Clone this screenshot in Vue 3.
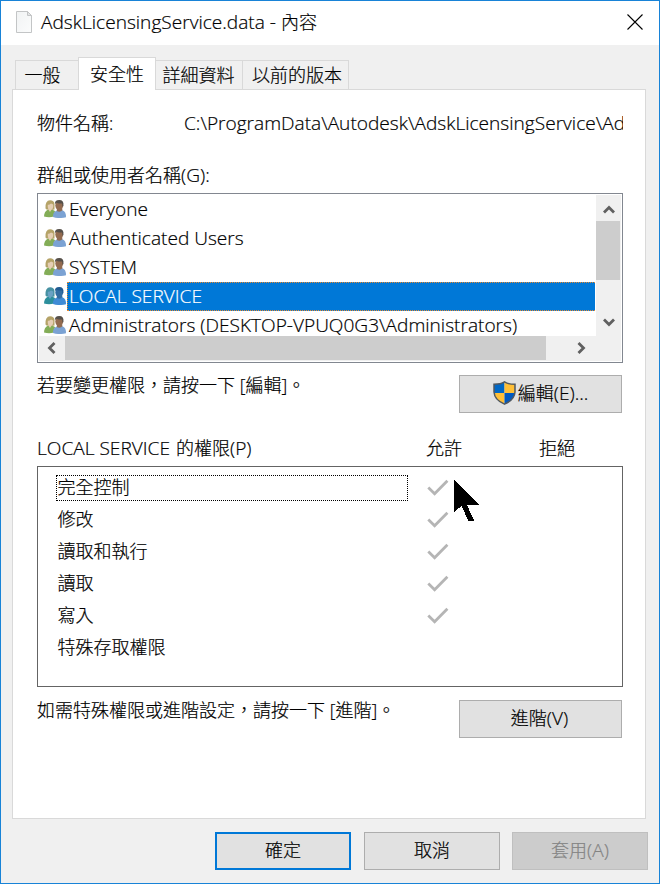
<script setup>
const tabs = [
  { label: '一般', cls: 'tab-general' },
  { label: '安全性', cls: 'tab-active' },
  { label: '詳細資料', cls: 'tab-details' },
  { label: '以前的版本', cls: 'tab-previous' },
]

const users = [
  { name: 'Everyone' },
  { name: 'Authenticated Users' },
  { name: 'SYSTEM' },
  { name: 'LOCAL SERVICE', selected: true },
  { name: 'Administrators (DESKTOP-VPUQ0G3\\Administrators)' },
]

const permissions = [
  { name: '完全控制', allow: true, focused: true },
  { name: '修改', allow: true },
  { name: '讀取和執行', allow: true },
  { name: '讀取', allow: true },
  { name: '寫入', allow: true },
  { name: '特殊存取權限', allow: false },
]

const path = 'C:\\ProgramData\\Autodesk\\AdskLicensingService\\Ad'
</script>

<template>
  <div class="window">
    <header class="titlebar">
      <svg class="file-icon" width="16" height="22" viewBox="0 0 16 22">
        <defs>
          <linearGradient id="paper" x1="0" y1="0" x2="1" y2="1">
            <stop offset="0" stop-color="#f1f3f4" />
            <stop offset="1" stop-color="#fbfcfc" />
          </linearGradient>
        </defs>
        <path d="M.5 .5H11.5L15.5 4.5V21.5H.5Z" fill="url(#paper)" stroke="#c3c5c6" />
        <path d="M11.5 .5V4.5H15.5Z" fill="#e3e5e6" stroke="#c3c5c6" />
      </svg>
      <h1 class="title"><span class="latin">AdskLicensingService.data -</span><span class="title-tail">內容</span></h1>
      <svg class="close" width="16" height="16" viewBox="0 0 16 16">
        <path d="M.5 .5L15.5 15.5M15.5 .5L.5 15.5" stroke="#000" stroke-width="1.1" />
      </svg>
    </header>

    <nav class="tabs">
      <div v-for="t in tabs" :key="t.label" class="tab" :class="t.cls">{{ t.label }}</div>
    </nav>

    <main class="panel">
      <div class="object-row">
        <span class="object-label">物件名稱:</span>
        <span class="object-path latin">{{ path }}</span>
      </div>
      <div class="groups-label">群組或使用者名稱<span class="latin">(G):</span></div>

      <div class="listbox">
        <div class="list-main">
          <ul class="users">
            <li v-for="u in users" :key="u.name" class="user" :class="{ selected: u.selected }">
              <svg class="people" width="22" height="18" viewBox="0 0 22 18">
                <path class="body-a" d="M0 16.5Q0 11.5 4 9.5H8L11 11L10 16.5Q5 18 0 16.5Z" />
                <path class="hair-a" d="M1.5 8.5Q1 .5 6 .3Q10 .2 10.5 4V9.5L7.5 10L2.5 9.5Z" />
                <path class="face-a" d="M3.8 4.8Q5.5 5 7 3.4L9.2 4.5Q9.6 8.5 7.5 9.8L6 12L4.4 9.5Q3.4 7.5 3.8 4.8Z" />
                <path class="body-b" d="M9 17Q8.7 12.2 12.5 10.8L18.5 10.3Q22 11.5 22 17.2Q15 19 9 17Z" />
                <path class="neck-b" d="M13 8L18.3 8.5V10.6Q16 12.6 12.7 11Z" />
                <ellipse class="face-b" cx="15.2" cy="5.5" rx="3.9" ry="4.7" />
                <path class="hair-b" d="M11 4.2Q10.6 .1 15.2 .1Q20.2 .1 19.4 6L18.6 7L18 3.6Q14.5 3.5 12.3 2.7Z" />
              </svg>
              <span class="user-name latin">{{ u.name }}</span>
            </li>
          </ul>
          <div class="vscroll">
            <div class="vbtn"><svg width="12" height="9" viewBox="0 0 12 9"><path d="M1 7.5L6 2.5L11 7.5" /></svg></div>
            <div class="vthumb"></div>
            <div class="vbtn vdown"><svg width="12" height="9" viewBox="0 0 12 9"><path d="M1 1.5L6 6.5L11 1.5" /></svg></div>
          </div>
        </div>
        <div class="hscroll">
          <div class="hbtn"><svg width="9" height="12" viewBox="0 0 9 12"><path d="M7.5 1L2.5 6L7.5 11" /></svg></div>
          <div class="hthumb"></div>
          <div class="hbtn hright"><svg width="9" height="12" viewBox="0 0 9 12"><path d="M1.5 1L6.5 6L1.5 11" /></svg></div>
        </div>
      </div>

      <div class="action-row edit-row">
        <span class="hint">若要變更權限，請按一下 [編輯]。</span>
        <button class="btn wide edit">
          <svg class="shield" width="23" height="24" viewBox="0 0 23 24">
            <defs>
              <clipPath id="shield-clip"><path d="M11.5 .7Q8 3.2 1 3.2V11Q1.5 19 11.5 23.3Q21.5 19 22 11V3.2Q15 3.2 11.5 .7Z" /></clipPath>
            </defs>
            <g clip-path="url(#shield-clip)">
              <rect width="11.5" height="12" fill="#0067c5" />
              <rect x="11.5" width="11.5" height="12" fill="#ffbf36" />
              <rect y="12" width="11.5" height="12" fill="#ffbf36" />
              <rect x="11.5" y="12" width="11.5" height="12" fill="#0058c0" />
            </g>
            <path d="M11.5 .9Q8 3.3 1 3.3V11Q1.5 19 11.5 23.1Q21.5 19 22 11V3.3Q15 3.3 11.5 .9Z" fill="none" stroke="#505860" stroke-width="1.5" />
          </svg>
          <span>編輯<span class="latin">(E)...</span></span>
        </button>
      </div>

      <div class="perm-head">
        <span class="perm-title"><span class="latin">LOCAL SERVICE</span><span>的權限<span class="latin">(P)</span></span></span>
        <span class="perm-allow">允許</span>
        <span class="perm-deny">拒絕</span>
      </div>

      <div class="perm-box">
        <div v-for="p in permissions" :key="p.name" class="perm">
          <span class="perm-name" :class="{ focused: p.focused }">{{ p.name }}</span>
          <svg v-if="p.allow" class="check" width="22" height="18" viewBox="0 0 22 18">
            <path d="M1.3 8.6L7.6 14.8L20.4 1.8" fill="none" stroke="#b5b5b5" stroke-width="2.8" />
          </svg>
        </div>
        <svg class="cursor" width="26" height="42" viewBox="0 0 26 42" shape-rendering="crispEdges">
          <path d="M0 0L25.3 25H13L20.2 41H14.3L7.7 26L0 32Z" />
        </svg>
      </div>

      <div class="action-row adv-row">
        <span class="hint">如需特殊權限或進階設定，請按一下 [進階]。</span>
        <button class="btn wide adv"><span>進階<span class="latin">(V)</span></span></button>
      </div>
    </main>

    <footer class="footer">
      <button class="btn primary">確定</button>
      <button class="btn">取消</button>
      <button class="btn disabled"><span>套用<span class="latin">(A)</span></span></button>
    </footer>
  </div>
</template>

<style>
body { margin: 0; background: #f0f0f0; }
</style>

<style scoped>
* { box-sizing: border-box; }
.window {
  width: 660px; height: 884px; display: flex; flex-direction: column;
  border: 1px solid #1883d7; background: #f0f0f0; color: #000; overflow: hidden;
  font-family: "Open Sans", "Noto Sans CJK TC", sans-serif; font-weight: 300;
  font-size: 18px; line-height: 26px; white-space: nowrap;
  -webkit-text-stroke: 0.2px currentColor;
}
.latin { font-size: 19.1px; line-height: 1; }
.titlebar { height: 44px; flex: none; background: #fff; display: flex; align-items: center; padding: 0 16px 0 15px; }
.file-icon { margin-bottom: 2px; }
.title { margin: 0 auto 2px 9px; font: inherit; display: flex; align-items: baseline; gap: 5px; }
.close { margin-bottom: 2px; }
.tabs { height: 44px; flex: none; display: flex; align-items: flex-end; padding-left: 14px; }
.tab { height: 29px; border: 1px solid #d9d9d9; border-width: 1px 1px 0 0; display: flex; justify-content: center; align-items: center; }
.tab-general { width: 63px; border-left-width: 1px; border-right-width: 0; padding-right: 9px; }
.tab-active { width: 78px; height: 33px; margin-bottom: -1px; padding-bottom: 1px; background: #fff; border-left-width: 1px; position: relative; z-index: 1; }
.tab-details { width: 87px; padding-right: 1px; }
.tab-previous { width: 106px; padding-left: 3px; }
.panel { width: 634px; height: 730px; flex: none; margin-left: 11px; padding: 0 22px 0 24px; border: 1px solid #d9d9d9; background: #fff; }
.object-row { display: flex; align-items: baseline; height: 26px; margin-top: 20px; }
.object-label { width: 147px; flex: none; }
.object-path { overflow: hidden; flex: 1; line-height: 26px; }
.groups-label { margin-top: 26px; height: 26px; }
.listbox { height: 170px; margin-top: 5px; border: 1px solid #828790; padding: 1px; }
.list-main { height: 141px; display: flex; }
.users { list-style: none; margin: 0; padding: 0 1px 0 5px; width: 557px; overflow: hidden; }
.user { height: 29px; display: flex; align-items: center; }
.people { flex: none; margin-right: 1px; margin-bottom: 2px; }
.user-name { flex: 1; height: 29px; line-height: 29px; padding-left: 2px; }
.selected .user-name { background: #0078d7; color: #fff; border: 1px dotted #e88a30; border-right: 0; line-height: 27px; padding-left: 1px; }
.body-a { fill: #83ad57; } .hair-a { fill: #b5a368; } .face-a { fill: #e5ceb4; }
.body-b { fill: #7ba2d3; } .neck-b { fill: #8f6c54; } .face-b { fill: #936b50; } .hair-b { fill: #56504a; }
.selected .body-a { fill: #2c8f9c; } .selected .hair-a { fill: #4791a2; } .selected .face-a { fill: #69a2c4; }
.selected .body-b { fill: #3f8bd5; } .selected .neck-b { fill: #346da0; } .selected .face-b { fill: #326da2; } .selected .hair-b { fill: #205a91; }
.vscroll { width: 25px; background: #f0f0f0; display: flex; flex-direction: column; }
.vbtn { width: 25px; height: 26px; display: flex; align-items: center; justify-content: center; padding-top: 3px; }
.vdown { margin-top: auto; padding: 0 0 1px; }
.vthumb { width: 24px; height: 59px; background: #cdcdcd; }
.hscroll { height: 25px; background: #f0f0f0; display: flex; }
.hbtn { width: 26px; height: 24px; display: flex; align-items: center; justify-content: center; padding-right: 1px; }
.hthumb { width: 481px; height: 24px; background: #cdcdcd; }
.hright { margin-left: 22px; padding-right: 0; }
.vbtn path, .hbtn path { fill: none; stroke: #606060; stroke-width: 2.8; }
.action-row { display: flex; justify-content: space-between; padding-right: 1px; }
.edit-row { margin-top: 12px; height: 38px; }
.hint { margin-top: -3px; }
.btn {
  width: 136px; height: 38px; padding: 0 0 2px; border: 1px solid #adadad; background: #e1e1e1; color: #000;
  font: inherit; display: flex; align-items: center; justify-content: center; gap: 2px;
  -webkit-text-stroke: 0.2px currentColor;
}
.wide { width: 163px; }
.adv { padding-right: 2px; }
.edit .shield { margin-bottom: 1px; }
.perm-head { display: flex; align-items: baseline; height: 26px; margin-top: 22px; }
.perm-title { width: 389px; display: flex; align-items: baseline; gap: 6px; }
.perm-allow { width: 113px; }
.perm-box { height: 221px; margin-top: 5px; border: 1px solid #646464; padding: 5px 0 0 18px; position: relative; }
.perm { height: 32px; display: flex; align-items: center; }
.perm-name { width: 352px; height: 26px; margin-bottom: 1px; padding: 1px 0 0 1.5px; line-height: 23px; }
.perm-name.focused { border: 1px dotted #000; padding: 0 0 0 .5px; }
.check { margin: 0 0 1px 19px; }
.cursor { position: absolute; left: 416px; top: 13px; }
.adv-row { margin-top: 13px; height: 38px; }
.footer { display: flex; margin-top: 13px; padding-left: 214px; gap: 13px; }
.primary { border: 2px solid #0078d7; }
.disabled { background: #cccccc; border-color: #bfbfbf; color: #838383; margin-left: -1px; }
</style>
